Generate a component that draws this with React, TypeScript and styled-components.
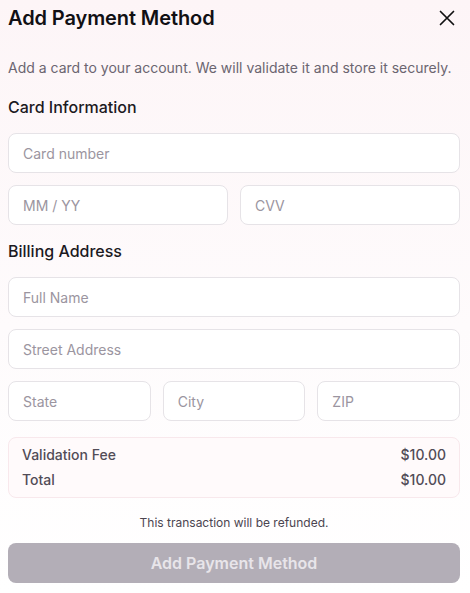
import React from 'react';
import styled, {createGlobalStyle} from 'styled-components';

const GlobalStyle = createGlobalStyle`
  html, body {
    margin: 0;
    padding: 0;
  }
  body {
    font-family: Inter, "Liberation Sans", sans-serif;
    background: linear-gradient(to bottom, #fdf5f7 0%, #fefbfc 55%, #ffffff 100%);
    min-height: 593px;
    color: #111014;
  }
  * {
    box-sizing: border-box;
  }
`;

const Dialog = styled.div`
  padding: 4px 10px 10px 8px;
  display: flex;
  flex-direction: column;
`;

const Header = styled.div`
  display: flex;
  align-items: center;
  justify-content: space-between;
`;

const Title = styled.h2`
  margin: 0;
  font-size: 20px;
  line-height: 28px;
  font-weight: 600;
  letter-spacing: -0.1px;
`;

const CloseButton = styled.button`
  border: none;
  background: none;
  padding: 0;
  margin-right: 5px;
  width: 16px;
  height: 16px;
  display: flex;
  align-items: center;
  justify-content: center;
  color: #111;
  cursor: pointer;
`;

const Description = styled.p`
  margin: 26px 0 0;
  font-size: 14px;
  line-height: 20px;
  color: #6b6570;
`;

const SectionTitle = styled.h3<{$top: number}>`
  margin: ${({$top}) => $top}px 0 14px;
  font-size: 16px;
  line-height: 24px;
  font-weight: 500;
  color: #1c1a1f;
`;

const Fields = styled.div`
  display: flex;
  flex-direction: column;
  gap: 12px;
`;

const Row = styled.div<{$cols: number}>`
  display: grid;
  grid-template-columns: repeat(${({$cols}) => $cols}, 1fr);
  gap: 12px;
`;

const Input = styled.input`
  width: 100%;
  height: 40px;
  border: 1px solid #e6e3e7;
  border-radius: 8px;
  background: #ffffff;
  padding: 0 14px;
  font-family: inherit;
  font-size: 14px;
  color: #111;
  outline: none;
  &::placeholder {
    color: #9b95a0;
  }
`;

const Summary = styled.div`
  margin-top: 16px;
  border: 1px solid #f8e8ec;
  border-radius: 8px;
  background: #fffafb;
  padding: 7px 13px 7px;
  display: flex;
  flex-direction: column;
  gap: 5px;
`;

const SummaryRow = styled.div`
  display: flex;
  justify-content: space-between;
  font-size: 14px;
  line-height: 20px;
  font-weight: 500;
  color: #524c57;
`;

const Note = styled.p`
  margin: 17px 0 0;
  text-align: center;
  font-size: 12px;
  line-height: 16px;
  color: #4b4550;
`;

const SubmitButton = styled.button`
  margin-top: 12px;
  height: 40px;
  width: 100%;
  border: none;
  border-radius: 8px;
  background: #b3aeb7;
  color: #e8e5ea;
  font-family: inherit;
  font-size: 16px;
  font-weight: 600;
  cursor: not-allowed;
`;

export default function App() {
  return (
    <>
      <GlobalStyle />
      <Dialog>
        <Header>
          <Title>Add Payment Method</Title>
          <CloseButton aria-label="Close">
            <svg width="16" height="16" viewBox="0 0 16 16" fill="none">
              <path
                d="M1.5 1.5L14.5 14.5M14.5 1.5L1.5 14.5"
                stroke="currentColor"
                strokeWidth="1.7"
                strokeLinecap="round"
              />
            </svg>
          </CloseButton>
        </Header>
        <Description>
          Add a card to your account. We will validate it and store it securely.
        </Description>

        <SectionTitle $top={17}>Card Information</SectionTitle>
        <Fields>
          <Input placeholder="Card number" />
          <Row $cols={2}>
            <Input placeholder="MM / YY" />
            <Input placeholder="CVV" />
          </Row>
        </Fields>

        <SectionTitle $top={14}>Billing Address</SectionTitle>
        <Fields>
          <Input placeholder="Full Name" />
          <Input placeholder="Street Address" />
          <Row $cols={3}>
            <Input placeholder="State" />
            <Input placeholder="City" />
            <Input placeholder="ZIP" />
          </Row>
        </Fields>

        <Summary>
          <SummaryRow>
            <span>Validation Fee</span>
            <span>$10.00</span>
          </SummaryRow>
          <SummaryRow>
            <span>Total</span>
            <span>$10.00</span>
          </SummaryRow>
        </Summary>

        <Note>This transaction will be refunded.</Note>
        <SubmitButton disabled>Add Payment Method</SubmitButton>
      </Dialog>
    </>
  );
}
